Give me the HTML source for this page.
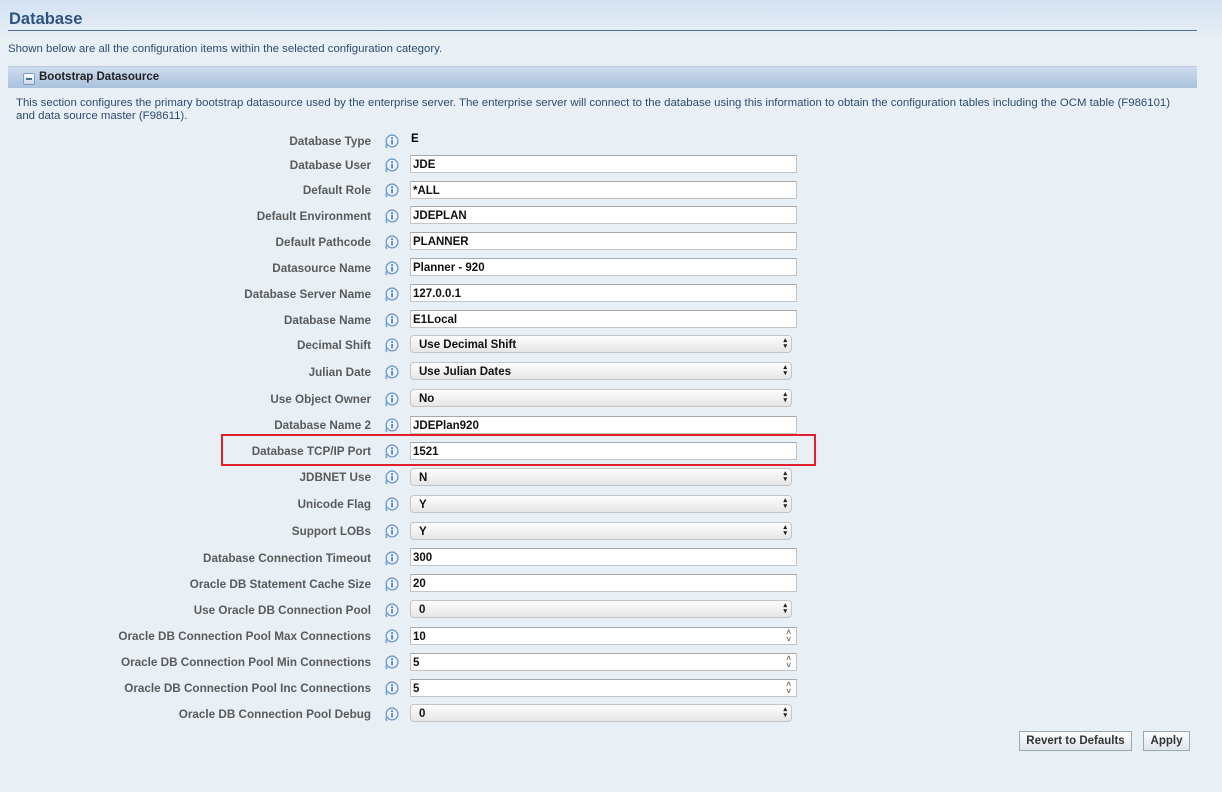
<!DOCTYPE html>
<html><head><meta charset="utf-8"><style>
body{margin:0;width:1222px;height:792px;background:linear-gradient(#d3e2f4 0,#e9f0f5 40px,#e9f0f5 100%);font-family:"Liberation Sans",sans-serif;position:relative;overflow:hidden}
.a{position:absolute}
h1{position:absolute;left:9px;top:10px;margin:0;font-size:16.5px;color:#2f5480;font-weight:bold}
.ul{left:8px;top:30px;width:1189px;height:1px;background:#4f6f98}
.d{font-size:11.4px;color:#2d4b70}
.bar{left:8px;top:66px;width:1189px;height:21px;background:linear-gradient(#cfdcee,#a9c1dd);border-top:1px solid #b8cbe2}
.bar span{position:absolute;left:31px;top:4px;font-size:11.5px;font-weight:bold;color:#222}
.mn{position:absolute;left:15px;top:6px;width:10px;height:10px;background:linear-gradient(#fff,#c8d8ea);border:1px solid #7f9cc0;border-radius:2px}
.mn:after{content:"";position:absolute;left:2px;top:4px;width:6px;height:2px;background:#4a6a98}
.lb{position:absolute;right:851px;font-size:11.7px;font-weight:bold;color:#5a5a5a;white-space:nowrap;margin-top:1px}
.ic{position:absolute;left:384px;width:15px;height:15px;margin-top:0px}
.in{position:absolute;left:410px;width:383px;height:16px;background:#fff;border:1px solid #c4c4c4;border-top-color:#a8a8a8;font-size:11.5px;font-weight:bold;color:#111;padding-left:2px;line-height:19px;overflow:hidden}
.sel{position:absolute;left:410px;width:372px;height:16px;background:linear-gradient(#fdfdfd,#e6e6e6);border:1px solid #c4c4c4;border-radius:4px;font-size:11.5px;font-weight:bold;color:#111;padding-left:8px;line-height:18px}
.sel:after{content:"\25B4\A\25BE";white-space:pre;position:absolute;right:4px;top:2px;font-size:7px;line-height:6px;color:#222}
.num{overflow:visible}
.num:after{content:"\02C4\A\02C5";white-space:pre;position:absolute;right:5px;top:1px;font-size:8px;line-height:7px;color:#666}
.btn{position:absolute;top:731px;height:18px;border:1px solid #9aa;background:linear-gradient(#fdfdfd,#dfe5ec);font-size:11.5px;font-weight:bold;color:#333;text-align:center;line-height:18px}
</style></head><body>
<h1>Database</h1>
<div class="a ul"></div>
<div class="a d" style="left:8px;top:43px">Shown below are all the configuration items within the selected configuration category.</div>
<div class="a bar"><div class="mn"></div><span>Bootstrap Datasource</span></div>
<div class="a d" style="left:16px;top:97px;line-height:13px;width:1190px">This section configures the primary bootstrap datasource used by the enterprise server. The enterprise server will connect to the database using this information to obtain the configuration tables including the OCM table (F986101)<br>and data source master (F98611).</div>

<svg width="0" height="0" style="position:absolute"><defs><symbol id="i" viewBox="0 0 14 14"><circle cx="7.5" cy="6.5" r="5.5" fill="#eaf2fb" stroke="#6d98cc" stroke-width="1.2"/><path d="M2.5 9 Q1 12 3 13" stroke="#6d98cc" fill="none" stroke-width="1.2"/><circle cx="7.5" cy="3.8" r="0.9" fill="#3a6fb0"/><rect x="6.8" y="5.5" width="1.4" height="4.2" fill="#3a6fb0"/></symbol></defs></svg>

<div class="lb" style="top:134px">Database Type</div><svg class="ic" style="top:134px"><use href="#i"/></svg><div class="a" style="left:411px;top:133px;font-size:11.5px;font-weight:bold">E</div>

<div class="lb" style="top:158px">Database User</div><svg class="ic" style="top:158px"><use href="#i"/></svg><div class="in" style="top:155px">JDE</div>
<div class="lb" style="top:183px">Default Role</div><svg class="ic" style="top:183px"><use href="#i"/></svg><div class="in" style="top:181px">*ALL</div>
<div class="lb" style="top:209px">Default Environment</div><svg class="ic" style="top:209px"><use href="#i"/></svg><div class="in" style="top:206px">JDEPLAN</div>
<div class="lb" style="top:235px">Default Pathcode</div><svg class="ic" style="top:235px"><use href="#i"/></svg><div class="in" style="top:232px">PLANNER</div>
<div class="lb" style="top:261px">Datasource Name</div><svg class="ic" style="top:261px"><use href="#i"/></svg><div class="in" style="top:258px">Planner - 920</div>
<div class="lb" style="top:287px">Database Server Name</div><svg class="ic" style="top:287px"><use href="#i"/></svg><div class="in" style="top:284px">127.0.0.1</div>
<div class="lb" style="top:313px">Database Name</div><svg class="ic" style="top:313px"><use href="#i"/></svg><div class="in" style="top:310px">E1Local</div>
<div class="lb" style="top:338px">Decimal Shift</div><svg class="ic" style="top:338px"><use href="#i"/></svg><div class="sel" style="top:335px">Use Decimal Shift</div>
<div class="lb" style="top:365px">Julian Date</div><svg class="ic" style="top:365px"><use href="#i"/></svg><div class="sel" style="top:362px">Use Julian Dates</div>
<div class="lb" style="top:392px">Use Object Owner</div><svg class="ic" style="top:392px"><use href="#i"/></svg><div class="sel" style="top:389px">No</div>
<div class="lb" style="top:418px">Database Name 2</div><svg class="ic" style="top:418px"><use href="#i"/></svg><div class="in" style="top:416px">JDEPlan920</div>
<div class="lb" style="top:444px">Database TCP/IP Port</div><svg class="ic" style="top:444px"><use href="#i"/></svg><div class="in" style="top:442px">1521</div>
<div class="a" style="left:221px;top:434px;width:591px;height:28px;border:2px solid #e0202a"></div>
<div class="lb" style="top:470px">JDBNET Use</div><svg class="ic" style="top:470px"><use href="#i"/></svg><div class="sel" style="top:468px">N</div>
<div class="lb" style="top:497px">Unicode Flag</div><svg class="ic" style="top:497px"><use href="#i"/></svg><div class="sel" style="top:495px">Y</div>
<div class="lb" style="top:524px">Support LOBs</div><svg class="ic" style="top:524px"><use href="#i"/></svg><div class="sel" style="top:522px">Y</div>
<div class="lb" style="top:551px">Database Connection Timeout</div><svg class="ic" style="top:551px"><use href="#i"/></svg><div class="in" style="top:548px">300</div>
<div class="lb" style="top:577px">Oracle DB Statement Cache Size</div><svg class="ic" style="top:577px"><use href="#i"/></svg><div class="in" style="top:574px">20</div>
<div class="lb" style="top:603px">Use Oracle DB Connection Pool</div><svg class="ic" style="top:603px"><use href="#i"/></svg><div class="sel" style="top:600px">0</div>
<div class="lb" style="top:629px">Oracle DB Connection Pool Max Connections</div><svg class="ic" style="top:629px"><use href="#i"/></svg><div class="in num" style="top:627px">10</div>
<div class="lb" style="top:655px">Oracle DB Connection Pool Min Connections</div><svg class="ic" style="top:655px"><use href="#i"/></svg><div class="in num" style="top:653px">5</div>
<div class="lb" style="top:681px">Oracle DB Connection Pool Inc Connections</div><svg class="ic" style="top:681px"><use href="#i"/></svg><div class="in num" style="top:679px">5</div>
<div class="lb" style="top:707px">Oracle DB Connection Pool Debug</div><svg class="ic" style="top:707px"><use href="#i"/></svg><div class="sel" style="top:704px">0</div>

<div class="btn" style="left:1019px;width:111px">Revert to Defaults</div>
<div class="btn" style="left:1143px;width:45px">Apply</div>
</body></html>
